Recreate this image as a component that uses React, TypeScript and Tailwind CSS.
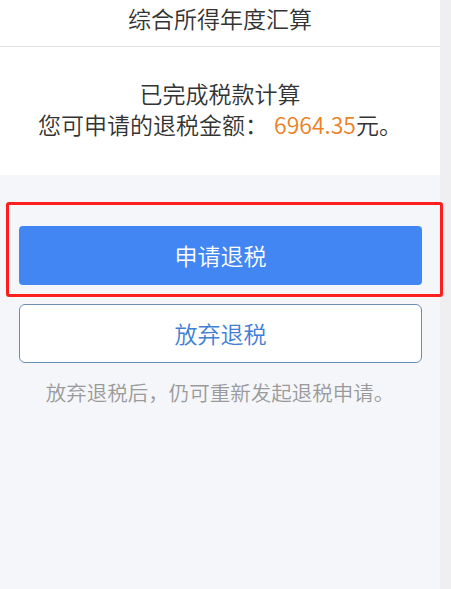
export default function App() {
  return (
    <div
      className="flex h-[589px] w-[451px] overflow-hidden"
      style={{ fontFamily: '"Noto Sans CJK SC", "Noto Sans", sans-serif' }}
    >
      <div className="flex w-[440px] flex-col bg-[#f5f6fa] font-[350]">
        {/* Header */}
        <div className="flex h-[47px] items-center justify-center border-b border-[#e3e3e5] bg-white pb-[9px] text-[23px] text-[#333]">
          综合所得年度汇算
        </div>

        {/* Result card */}
        <div className="flex h-[128px] flex-col items-center justify-center bg-white pb-[5px] text-[23px] leading-[31px] text-[#333]">
          <p>已完成税款计算</p>
          <p>
            您可申请的退税金额：<span className="ml-[6px] text-[#ec8126]">6964.35</span>元。
          </p>
        </div>

        {/* Actions */}
        <div className="relative ml-[19px] mr-[18px] mt-[51px]">
          <button className="flex h-[59px] w-full items-center justify-center rounded-[4px] bg-[#4286f4] text-[23px] text-white">
            申请退税
          </button>
          <div className="pointer-events-none absolute -bottom-[12px] -left-[13px] -right-[21px] -top-[24px] rounded-[3px] border-[3px] border-[#ff1e1e]" />
        </div>

        <button className="ml-[19px] mr-[18px] mt-[19px] flex h-[59px] items-center justify-center rounded-[6px] border border-[#6a8fb3] bg-white text-[23px] text-[#3f80d4]">
          放弃退税
        </button>

        <p className="mt-[15px] text-center text-[20.5px] leading-[28px] text-[#9a9a9a]">
          放弃退税后，仍可重新发起退税申请。
        </p>
      </div>
      <div className="flex-1 bg-[#efeff1]" />
    </div>
  )
}
